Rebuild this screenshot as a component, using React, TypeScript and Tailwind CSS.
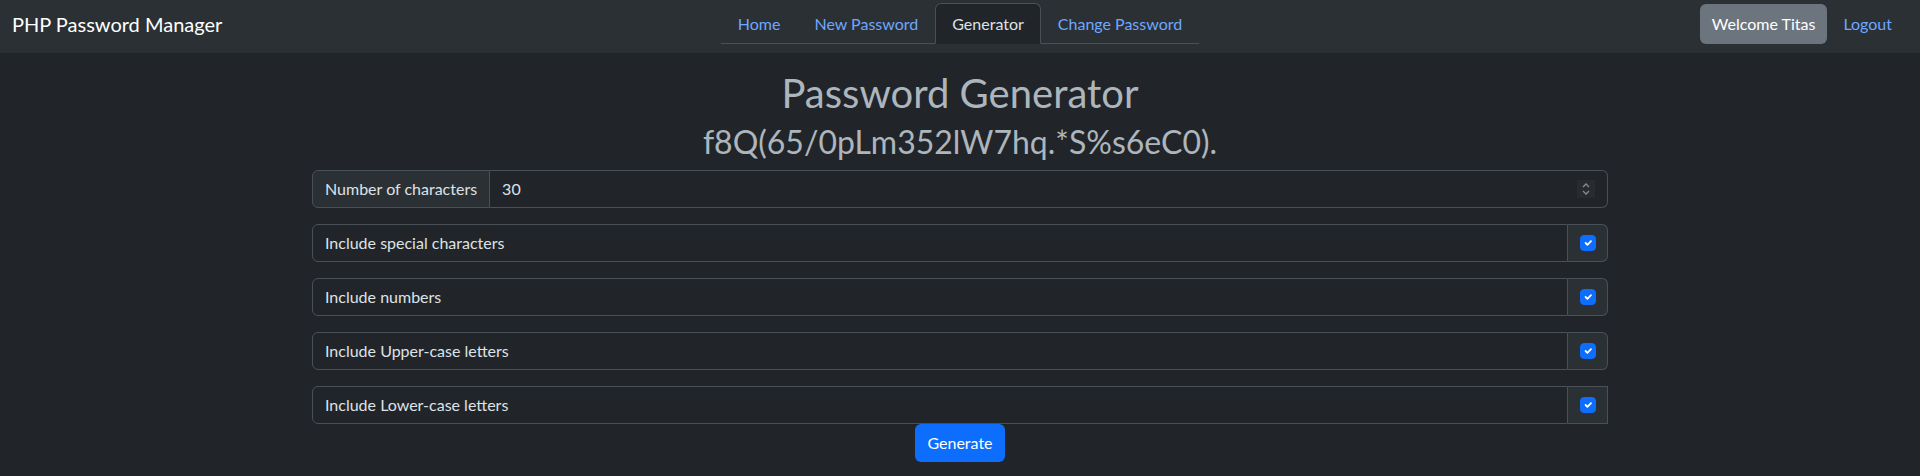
import { useState } from "react";

const options = [
  "Include special characters",
  "Include numbers",
  "Include Upper-case letters",
  "Include Lower-case letters",
];

function Check({ checked, onClick }: { checked: boolean; onClick: () => void }) {
  return (
    <button
      type="button"
      onClick={onClick}
      className={
        "w-4 h-4 rounded-[4px] flex items-center justify-center border " +
        (checked ? "bg-[#0d6efd] border-[#0d6efd]" : "bg-[#212529] border-[#495057]")
      }
    >
      {checked && (
        <svg viewBox="0 0 20 20" className="w-3 h-3">
          <path
            d="M6 10l3 3 6-6"
            fill="none"
            stroke="#fff"
            strokeWidth="3"
            strokeLinecap="round"
            strokeLinejoin="round"
          />
        </svg>
      )}
    </button>
  );
}

export default function App() {
  const [checks, setChecks] = useState([true, true, true, true]);
  const [length] = useState(30);

  return (
    <div
      className="min-h-[476px] bg-[#212529] text-[#dee2e6] text-base"
      style={{ fontFamily: '"Lato", "Liberation Sans", sans-serif' }}
    >
      <nav className="h-[53px] bg-[#2b3035] flex items-start pt-[3px] px-3">
        <div className="h-[41px] flex items-center text-xl text-white w-[300px]">
          PHP Password Manager
        </div>
        <ul className="mx-auto flex border-b border-[#495057] h-[41px]">
          <li className="px-4 py-2 leading-6 text-[#6ea8fe] border border-transparent">Home</li>
          <li className="px-4 py-2 leading-6 text-[#6ea8fe] border border-transparent">New Password</li>
          <li className="px-4 py-2 leading-6 text-[#dee2e6] bg-[#212529] border border-[#495057] border-b-[#212529] rounded-t-md -mb-px">
            Generator
          </li>
          <li className="px-4 py-2 leading-6 text-[#6ea8fe] border border-transparent">Change Password</li>
        </ul>
        <div className="w-[300px] flex justify-end items-center h-[41px]">
          <button className="h-[40px] px-3 rounded-md bg-[#6c757d] text-white leading-6">
            Welcome Titas
          </button>
          <a className="px-4 py-2 leading-6 text-[#6ea8fe]">Logout</a>
        </div>
      </nav>

      <div className="w-[1320px] mx-auto px-3">
        <h1 className="text-center text-[40px] leading-[1.2] text-[#adb5bd] mt-4">
          Password Generator
        </h1>
        <h2 className="text-center text-[32px] leading-[1.2] text-[#adb5bd] mt-[6px]">
          f8Q(65/0pLm352lW7hq.*S%s6eC0).
        </h2>

        <div className="mt-[9px] flex h-[38px] mb-4">
          <div className="px-3 flex items-center bg-[#2b3035] border border-[#495057] rounded-l-md">
            Number of characters
          </div>
          <div className="flex-1 flex items-center justify-between px-3 border border-l-0 border-[#495057] rounded-r-md">
            <span>{length}</span>
            <div className="w-[18px] h-[18px] bg-[#2a2a31] flex items-center justify-center">
              <svg viewBox="0 0 18 18" className="w-[18px] h-[18px]">
                <path d="M6 7l3-3 3 3M6 11l3 3 3-3" fill="none" stroke="#8b8b8f" strokeWidth="1.3" />
              </svg>
            </div>
          </div>
        </div>

        {options.map((label, i) => (
          <div key={label} className={"flex h-[38px] " + (i < options.length - 1 ? "mb-4" : "")}>
            <div className="flex-1 flex items-center px-3 border border-[#495057] rounded-l-md">
              {label}
            </div>
            <div
              className={
                "w-10 flex items-center justify-center bg-[#2b3035] border border-l-0 border-[#495057] " +
                (i < options.length - 1 ? "rounded-r-md" : "")
              }
            >
              <Check
                checked={checks[i]}
                onClick={() => setChecks((c) => c.map((v, j) => (j === i ? !v : v)))}
              />
            </div>
          </div>
        ))}

        <div className="flex justify-center">
          <button className="h-[38px] px-3 rounded-md bg-[#0d6efd] text-white leading-6">
            Generate
          </button>
        </div>
      </div>
    </div>
  );
}
